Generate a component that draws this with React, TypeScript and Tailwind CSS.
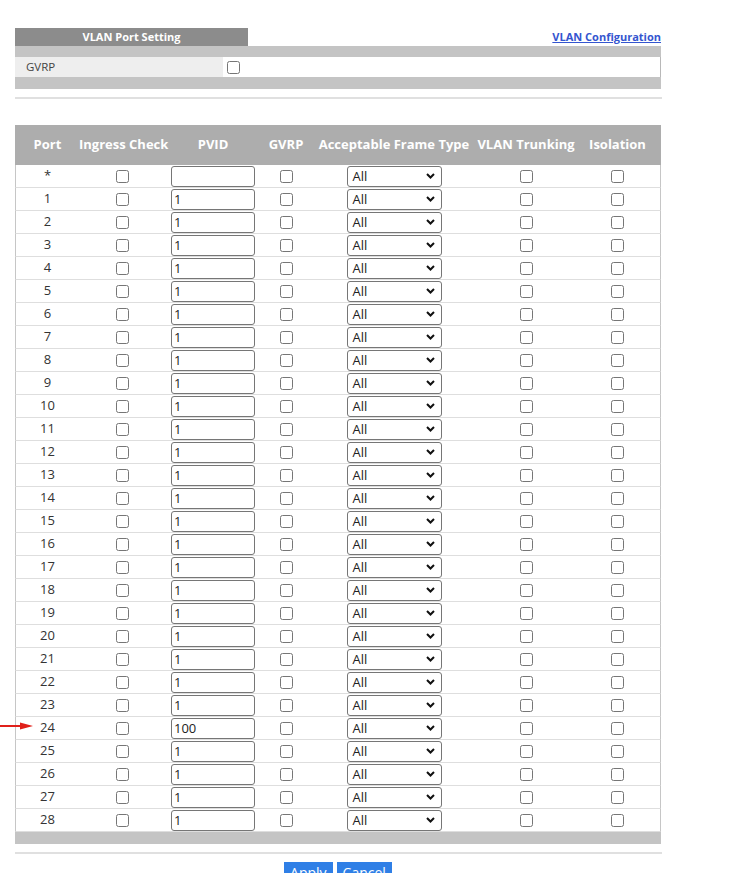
import React from "react";

const FONT = { fontFamily: '"Open Sans", "DejaVu Sans", sans-serif' };

const ports: string[] = ["*", ...Array.from({ length: 28 }, (_, i) => String(i + 1))];

function pvidFor(port: string) {
  if (port === "*") return "";
  if (port === "24") return "100";
  return "1";
}

const COLS = "grid grid-cols-[63px_86px_96px_50px_166px_98px_85px]";

function Check() {
  return <input type="checkbox" className="m-0 h-[13px] w-[13px]" />;
}

function PvidBox({ value }: { value: string }) {
  return (
    <div className="flex h-[21px] w-[84px] items-center rounded-[3px] border border-[#767676] bg-white pl-[2px] text-[13px] leading-[19px] text-[#222]">
      {value}
    </div>
  );
}

function FrameSelect() {
  return (
    <div className="flex h-[21px] w-[95px] items-center justify-between rounded-[3px] border border-[#767676] bg-white pl-[5px] pr-[6px] text-[13px] leading-[19px] text-[#222]">
      <span>All</span>
      <svg width="9" height="6" viewBox="0 0 9 6" aria-hidden="true">
        <polyline points="1,1 4.5,4.5 8,1" fill="none" stroke="#111" strokeWidth="2" />
      </svg>
    </div>
  );
}

function PortRow({ port }: { port: string }) {
  return (
    <div
      className={`${COLS} h-[23px] items-center border-x border-b border-x-[#c6c6c6] border-b-[#dedede] text-[13px] text-[#333]`}
    >
      <div className="text-center">{port}</div>
      <div className="flex justify-center">
        <Check />
      </div>
      <div className="flex justify-center">
        <PvidBox value={pvidFor(port)} />
      </div>
      <div className="flex justify-center">
        <Check />
      </div>
      <div className="flex justify-center">
        <FrameSelect />
      </div>
      <div className="flex justify-center">
        <Check />
      </div>
      <div className="flex justify-center">
        <Check />
      </div>
    </div>
  );
}

export default function App() {
  const headers = [
    "Port",
    "Ingress Check",
    "PVID",
    "GVRP",
    "Acceptable Frame Type",
    "VLAN Trunking",
    "Isolation",
  ];

  return (
    <div className="relative min-h-[873px] w-[746px] bg-white pl-[15px] pt-[28px]" style={FONT}>
      {/* title tab and link */}
      <div className="flex h-[18px] w-[646px] items-center justify-between">
        <div className="flex h-[18px] w-[233px] items-center justify-center bg-[#8c8c8c] text-[11px] font-bold text-white">
          VLAN Port Setting
        </div>
        <a href="#" className="text-[11px] font-bold text-[#3455cf] underline">
          VLAN Configuration
        </a>
      </div>

      {/* global GVRP setting */}
      <div className="w-[646px]">
        <div className="h-[11px] bg-[#c4c4c4]" />
        <div className="flex h-[20px]">
          <div className="flex w-[208px] items-center bg-[#eeeeee] pl-[11px] text-[11.5px] text-[#444]">
            GVRP
          </div>
          <div className="flex flex-1 items-center border-r border-[#b8b8b8] bg-white pl-[4px]">
            <Check />
          </div>
        </div>
        <div className="h-[12px] bg-[#c4c4c4]" />
      </div>

      <div className="mt-[8px] h-[2px] w-[647px] bg-[#e0e0e0]" />

      {/* port table */}
      <div className="mt-[26px] w-[646px]">
        <div
          className={`${COLS} h-[40px] items-center border-x border-[#adadad] bg-[#adadad] text-[13px] font-bold text-white`}
        >
          {headers.map((h) => (
            <div key={h} className="whitespace-nowrap text-center">
              {h}
            </div>
          ))}
        </div>
        {ports.map((p) => (
          <PortRow key={p} port={p} />
        ))}
        <div className="h-[12px] bg-[#c4c4c4]" />
      </div>

      <div className="mt-[8px] h-[2px] w-[647px] bg-[#e0e0e0]" />

      <div className="mt-[8px] flex w-[646px] justify-center gap-[4px]">
        <button className="h-[22px] bg-[#2f7fe6] px-[6px] text-[14px] leading-[22px] text-white">
          Apply
        </button>
        <button className="h-[22px] bg-[#2f7fe6] px-[6px] text-[14px] leading-[22px] text-white">
          Cancel
        </button>
      </div>

      {/* red pointer beside port 24 */}
      <svg
        className="absolute left-0 top-[721px]"
        width="34"
        height="10"
        viewBox="0 0 34 10"
        aria-hidden="true"
      >
        <line x1="0" y1="5" x2="22" y2="5" stroke="#e0201a" strokeWidth="2" />
        <polygon points="20,1.5 33,5 20,8.5" fill="#e0201a" />
      </svg>
    </div>
  );
}
